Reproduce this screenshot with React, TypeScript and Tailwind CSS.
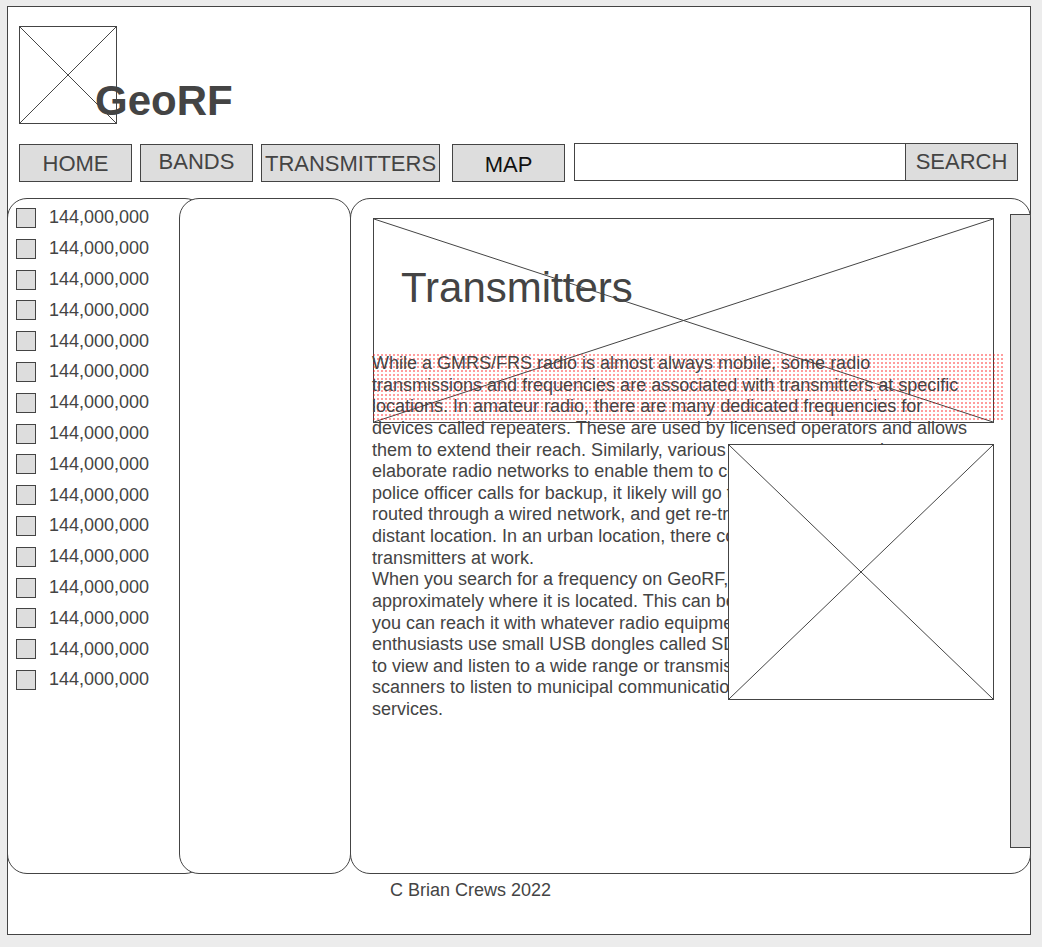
import React from 'react'

const font = { fontFamily: '"Liberation Sans", Arial, sans-serif' }

function Placeholder() {
  return (
    <svg className="absolute inset-0 h-full w-full" preserveAspectRatio="none" viewBox="0 0 100 100">
      <line x1="0" y1="0" x2="100" y2="100" stroke="#444" strokeWidth="1" vectorEffect="non-scaling-stroke" />
      <line x1="100" y1="0" x2="0" y2="100" stroke="#444" strokeWidth="1" vectorEffect="non-scaling-stroke" />
    </svg>
  )
}

export default function App() {
  const freqs = Array.from({ length: 16 }, () => '144,000,000')

  return (
    <div className="min-h-screen bg-[#ececec] pl-[7px] pt-[6px] text-[#444]" style={font}>
      <div className="h-[929px] w-[1024px] border border-[#444] bg-white">
        {/* Header */}
        <div className="flex items-start">
          <div className="relative ml-[11px] mt-[19px] h-[98px] w-[98px] border border-[#444]">
            <Placeholder />
          </div>
          <h1 className="relative -ml-[22px] mt-[73px] text-[42px] font-bold leading-[42px] text-[#444]">GeoRF</h1>
        </div>

        {/* Nav */}
        <div className="ml-[11px] mt-[19px] flex items-start text-[22px] leading-none">
          <button className="mt-px flex h-[38px] w-[113px] items-center justify-center border border-[#444] bg-[#dddddd] pt-[2px] text-[#444]">
            HOME
          </button>
          <button className="ml-[8px] mt-px flex h-[38px] w-[113px] items-center justify-center border border-[#444] bg-[#dddddd] pb-[2px] text-[#444]">
            BANDS
          </button>
          <button className="ml-[8px] mt-px flex h-[38px] w-[179px] items-center justify-center border border-[#444] bg-[#dddddd] pt-px text-[#444]">
            TRANSMITTERS
          </button>
          <button className="ml-[12px] mt-px flex h-[38px] w-[113px] items-center justify-center border border-[#444] bg-[#dddddd] pt-[3px] text-[#111]">
            MAP
          </button>
          <input className="ml-[9px] h-[38px] w-[332px] border border-[#444] bg-white outline-none" />
          <button className="-ml-px flex h-[38px] w-[113px] items-center justify-center border border-[#444] bg-[#dddddd] text-[#444]">
            SEARCH
          </button>
        </div>

        {/* Panels */}
        <div className="-mx-px mt-[16px] flex h-[676px]">
          <div className="w-[198px] shrink-0 rounded-[20px] border border-[#444] pl-[8px] pt-[3.6px]">
            {freqs.map((f, i) => (
              <div key={i} className="flex h-[30.8px] items-center">
                <span className="h-[20px] w-[20px] border border-[#444] bg-[#dddddd]" />
                <span className="ml-[13px] text-[18px]">{f}</span>
              </div>
            ))}
          </div>
          <div className="-ml-[26px] w-[172px] shrink-0 rounded-[20px] border border-[#444] bg-white" />
          <div className="-ml-px flex flex-1 rounded-[20px] border border-[#444] bg-white">
            <div className="w-[633px] shrink-0 pl-[21px] pt-[19px]" style={{ boxSizing: 'content-box' }}>
              <div className="relative ml-px h-[205px] w-[621px] border border-[#444]">
                <Placeholder />
                <h2 className="relative pl-[27px] pt-[48px] text-[42px] leading-[42px] text-[#444]">Transmitters</h2>
              </div>
              <div className="relative -mt-[70px] text-[18px] leading-[21.62px]">
                <div className="absolute left-0 right-0 top-0 h-[69px] bg-[radial-gradient(circle,rgba(255,0,0,0.8)_0.5px,transparent_0.9px)] bg-[length:4px_4px]" />
                <div className="relative w-[611px]">
                  <p>
                    While a GMRS/FRS radio is almost always mobile, some radio transmissions and frequencies are associated
                    with transmitters at specific locations. In amateur radio, there are many dedicated frequencies for
                    devices called repeaters. These are used by licensed operators and allows them to extend their reach.
                    Similarly, various government agencies use
                    <br />
                    elaborate radio networks to enable them to communicate. When a
                    <br />
                    police officer calls for backup, it likely will go to a tower, be
                    <br />
                    routed through a wired network, and get re-transmitted from a more
                    <br />
                    distant location. In an urban location, there could be hundreds of
                    <br />
                    transmitters at work.
                  </p>
                  <p>
                    When you search for a frequency on GeoRF, you will be able to see
                    <br />
                    approximately where it is located. This can be helpful to decide if
                    <br />
                    you can reach it with whatever radio equipment you have. Many radio
                    <br />
                    enthusiasts use small USB dongles called SDRs (software radios)
                    <br />
                    to view and listen to a wide range or transmissions. Others use
                    <br />
                    scanners to listen to municipal communications, such as emergency
                    <br />
                    services.
                  </p>
                </div>
                <div className="absolute left-[356px] top-[91px] h-[256px] w-[266px] border border-[#444] bg-white">
                  <Placeholder />
                </div>
              </div>
            </div>
            <div className="ml-[5px] mb-[25px] mt-[15px] w-[20px] border-b border-l border-t border-[#444] bg-[#dddddd]" />
          </div>
        </div>

        {/* Footer */}
        <div className="ml-[382px] mt-[6px] text-[18px] leading-[21px]">C Brian Crews 2022</div>
      </div>
    </div>
  )
}
